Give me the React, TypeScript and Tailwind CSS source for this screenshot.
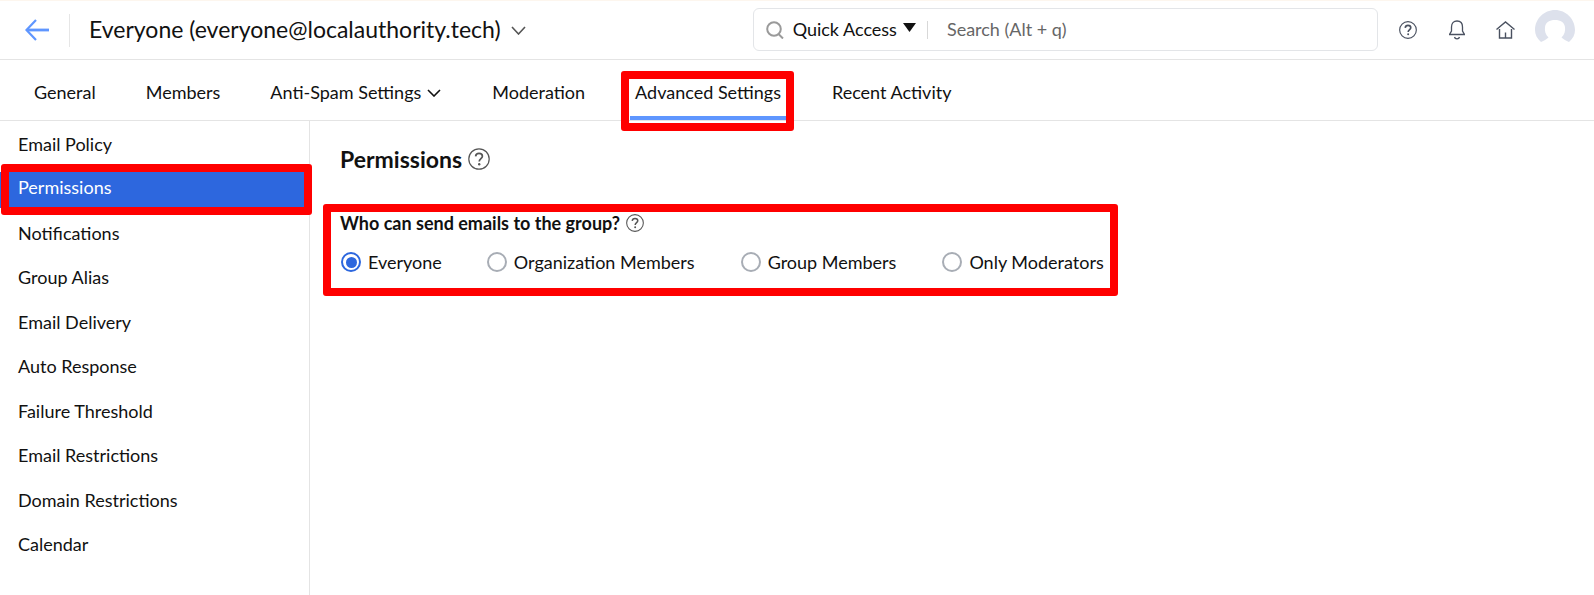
const side = ["Email Policy","Permissions","Notifications","Group Alias","Email Delivery","Auto Response","Failure Threshold","Email Restrictions","Domain Restrictions","Calendar"];
const radios = [
  { label: "Everyone", on: true, gap: "mr-[45px]" },
  { label: "Organization Members", on: false, gap: "mr-[46px]" },
  { label: "Group Members", on: false, gap: "mr-[46px]" },
  { label: "Only Moderators", on: false, gap: "mr-[46px]" },
];

function Avatar() {
  return (
    <svg width="40" height="40" viewBox="0 0 40 40" className="shrink-0">
      <path d="M6 32 C2 28.5 0 24.5 0 20 C0 9 9 0 20 0 C31 0 40 9 40 20 C40 24.5 38 28.5 34 32 C31 30.5 28.5 29.5 26.5 27.5 C29.5 25 30.5 21 30 17 C29.5 12.5 25.5 10 20 10 C14.5 10 10.5 12.5 10 17 C9.5 21 10.5 25 13.5 27.5 C11.5 29.5 9 30.5 6 32 Z" fill="#dde1ec" />
    </svg>
  );
}

function Chevron({ w, h, color, stroke }: { w: number; h: number; color: string; stroke: number }) {
  return (
    <svg width={w} height={h} viewBox={`0 0 ${w} ${h}`} fill="none" stroke={color} strokeWidth={stroke} className="shrink-0">
      <path d={`M1 1 L${w / 2} ${h - 1} L${w - 1} 1`} />
    </svg>
  );
}

function Help({ size, color, sw }: { size: number; color: string; sw: number }) {
  return (
    <svg width={size} height={size} viewBox="0 0 22 22" fill="none" stroke={color} strokeWidth={sw} className="shrink-0">
      <circle cx="11" cy="11" r="10.2" />
      <path d="M7.6 8.4 C7.8 6.4 9.2 5.4 11 5.4 C13 5.4 14.4 6.6 14.4 8.3 C14.4 10.4 11.2 10.8 11.2 13.4" strokeWidth={sw * 1.4} />
      <circle cx="11.2" cy="16.3" r="1.2" fill={color} stroke="none" />
    </svg>
  );
}

export default function App() {
  return (
    <div className="relative flex h-[595px] w-[1594px] flex-col overflow-hidden bg-white font-['Lato',sans-serif] text-[#111]">
      <header className="flex h-[60px] shrink-0 items-center border-t border-b border-t-[#fdf6ee] border-b-[#e4e4e4] pl-[25px]">
        <svg width="24" height="22" viewBox="0 0 24 22" fill="none" stroke="#5f96ff" strokeWidth="2.2" className="shrink-0">
          <path d="M11 1 L1.5 11 L11 21" />
          <path d="M2 11 H24" strokeWidth="2.8" />
        </svg>
        <div className="ml-[20px] h-[33px] w-px bg-[#e6e6e6]" />
        <h1 className="mb-px ml-[19px] text-[23px] leading-none">Everyone (everyone@localauthority.tech)</h1>
        <div className="ml-[10px]"><Chevron w={15} h={9} color="#555" stroke={1.6} /></div>
        <div className="mb-px ml-[227px] flex h-[43px] w-[625px] shrink-0 items-center rounded-md border border-[#e3e5e8] pl-[12px]">
          <svg width="18" height="18" viewBox="0 0 18 18" fill="none" stroke="#9a9a9a" strokeWidth="2" className="shrink-0">
            <circle cx="8" cy="8" r="6.8" />
            <path d="M12.5 13 L17 17.5" />
          </svg>
          <span className="ml-[9px] text-[18px]">Quick Access</span>
          <svg width="13" height="9" viewBox="0 0 13 9" className="mb-[4px] ml-[6px] shrink-0"><path d="M0 0 H13 L6.5 9 Z" fill="#111" /></svg>
          <div className="ml-[11px] h-[18px] w-px bg-[#d8d8d8]" />
          <span className="ml-[19px] text-[18px] text-[#666]">Search (Alt + q)</span>
        </div>
        <div className="ml-[21px]"><Help size={18} color="#4a5160" sw={1.4} /></div>
        <svg width="16" height="20" viewBox="0 0 16 20" fill="none" stroke="#4a5160" strokeWidth="1.3" className="ml-[32px] shrink-0">
          <path d="M2.5 11 V7 C2.5 3 5 1 8 1 C11 1 13.5 3 13.5 7 V11 L15.5 14.5 H0.5 Z" />
          <path d="M5.5 17 C6 19.4 10 19.4 10.5 17" />
        </svg>
        <svg width="19" height="18" viewBox="0 0 19 18" fill="none" stroke="#4a5160" strokeWidth="1.4" className="ml-[31px] shrink-0">
          <path d="M0.5 8.5 L9.5 1 L18.5 8.5" />
          <path d="M3.5 8 V17 H15.5 V8" />
          <path d="M9.5 11.5 V17" />
        </svg>
        <div className="ml-[20px]"><Avatar /></div>
      </header>

      <nav className="flex h-[61px] shrink-0 items-stretch border-b border-[#e4e4e4] pl-[34px] text-[18px]">
        <span className="flex items-center pt-[4px]">General</span>
        <span className="ml-[50px] flex items-center pt-[4px]">Members</span>
        <span className="ml-[50px] flex items-center pt-[4px]">
          Anti-Spam Settings
          <span className="ml-[6px] mt-[2px]"><Chevron w={14} h={8} color="#111" stroke={1.6} /></span>
        </span>
        <span className="ml-[51px] flex items-center pt-[4px]">Moderation</span>
        <span className="relative ml-[45px] flex items-center pl-[5px] pr-[5px] pt-[4px]">
          Advanced Settings
          <span className="absolute inset-x-0 bottom-0 h-[4px] bg-[#5f96ff]" />
        </span>
        <span className="ml-[46px] flex items-center pt-[4px]">Recent Activity</span>
      </nav>

      <div className="flex min-h-0 flex-1">
        <aside className="w-[310px] shrink-0 border-r border-[#e4e4e4] pt-px text-[18px]">
          {side.map((s) =>
            s === "Permissions" ? (
              <div key={s} className="mb-[3px] mt-[5.5px] flex h-[36px] items-center bg-[#2d67de] pb-[5px] pl-[18px] text-white">{s}</div>
            ) : (
              <div key={s} className="flex h-[44.5px] items-center pl-[18px]">{s}</div>
            )
          )}
        </aside>
        <main className="pl-[30px]">
          <div className="mt-[23px] flex items-center">
            <h2 className="text-[23px] font-bold leading-[30px]">Permissions</h2>
            <div className="ml-[6px]"><Help size={22} color="#555" sw={1.2} /></div>
          </div>
          <div className="mt-[37px] flex items-center">
            <span className="text-[18px] font-bold leading-[24px]">Who can send emails to the group?</span>
            <div className="ml-[6px]"><Help size={18} color="#555" sw={1.3} /></div>
          </div>
          <div className="mt-[15px] flex items-center pl-px text-[18px] leading-[24px]">
            {radios.map((r) => (
              <label key={r.label} className={`flex items-center ${r.gap}`}>
                <span className={`flex size-[20px] items-center justify-center rounded-full border-2 ${r.on ? "border-[#2d67de]" : "border-[#a8adb5]"}`}>
                  {r.on && <span className="size-[11px] rounded-full bg-[#2d67de]" />}
                </span>
                <span className="ml-[7px]">{r.label}</span>
              </label>
            ))}
          </div>
        </main>
      </div>

      <div className="absolute left-[621px] top-[71px] h-[60px] w-[173px] rounded-[3px] border-[8px] border-[#ff0000]" />
      <div className="absolute left-[1px] top-[164px] h-[51px] w-[311px] rounded-[3px] border-[8px] border-[#ff0000]" />
      <div className="absolute left-[323px] top-[204px] h-[92px] w-[795px] rounded-[3px] border-[8px] border-[#ff0000]" />
    </div>
  );
}
